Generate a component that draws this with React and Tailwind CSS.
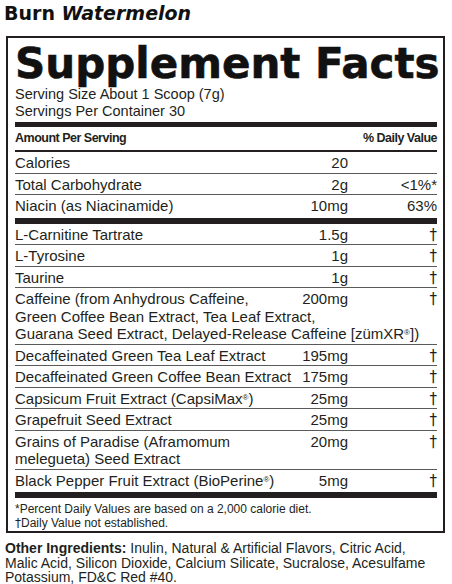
import clsx from 'clsx';

// Burn Watermelon – supplement facts panel
const Reg = () => <sup className="text-[8px]">®</sup>;
const Dag = () => <span className="font-['DejaVu_Sans',sans-serif] leading-none text-[#231f20]">†</span>;

const top = [
  { name: 'Calories', amt: '20', dv: '' },
  { name: 'Total Carbohydrate', amt: '2g', dv: '<1%*' },
  { name: 'Niacin (as Niacinamide)', amt: '10mg', dv: '63%', last: true },
];

const actives = [
  { name: 'L-Carnitine Tartrate', amt: '1.5g', dv: <Dag /> },
  { name: 'L-Tyrosine', amt: '1g', dv: <Dag /> },
  { name: 'Taurine', amt: '1g', dv: <Dag /> },
  {
    name: 'Caffeine (from Anhydrous Caffeine,',
    amt: '200mg',
    dv: <Dag />,
    more: [
      'Green Coffee Bean Extract, Tea Leaf Extract,',
      <>Guarana Seed Extract, Delayed-Release Caffeine [zümXR<Reg />])</>,
    ],
  },
  { name: 'Decaffeinated Green Tea Leaf Extract', amt: '195mg', dv: <Dag /> },
  { name: 'Decaffeinated Green Coffee Bean Extract', amt: '175mg', dv: <Dag /> },
  { name: <>Capsicum Fruit Extract (CapsiMax<Reg />)</>, amt: '25mg', dv: <Dag /> },
  { name: 'Grapefruit Seed Extract', amt: '25mg', dv: <Dag /> },
  {
    name: 'Grains of Paradise (Aframomum',
    amt: '20mg',
    dv: <Dag />,
    more: ['melegueta) Seed Extract'],
  },
  { name: <>Black Pepper Fruit Extract (BioPerine<Reg />)</>, amt: '5mg', dv: <Dag />, last: true },
];

function Row({ name, amt, dv, more, last }) {
  return (
    <div
      className={clsx(
        'pt-[2px] text-[15px] leading-[17.5px]',
        last ? 'pb-[3px] border-b-[6px] border-[#231f20]' : 'pb-[1px] border-b border-[#5a5a5a]'
      )}
    >
      <div className="flex">
        <div className="flex-1 min-w-0 whitespace-nowrap">{name}</div>
        <div className="shrink-0 text-right">{amt}</div>
        <div className="w-[89px] shrink-0 text-right">{dv}</div>
      </div>
      {more?.map((l, i) => (
        <div key={i} className="whitespace-nowrap">{l}</div>
      ))}
    </div>
  );
}

export default function App() {
  return (
    <div className="w-[452px] h-[584px] overflow-hidden bg-white text-[#231f20] font-['Liberation_Sans',Arial,sans-serif]">
      <div className="h-[36px] pl-[4px] pt-[2px] text-[19px] leading-[22px] font-bold font-['DejaVu_Sans',sans-serif] text-[#111]">
        Burn <i>Watermelon</i>
      </div>

      <div className="ml-[6px] w-[439px] border-2 border-[#231f20] pl-[7px] pr-[6px]">
        <div className="pt-[4.5px] text-[42px] leading-[42px] font-bold font-['DejaVu_Sans',sans-serif] whitespace-nowrap text-[#111] [-webkit-text-stroke:0.6px_#111]">
          Supplement Facts
        </div>
        <div className="mt-[1.5px] text-[14.5px] leading-[16.5px]">
          <div>Serving Size About 1 Scoop (7g)</div>
          <div>Servings Per Container 30</div>
        </div>
        <div className="mt-[3px] h-[5px] bg-[#231f20]" />

        <div className="flex justify-between pt-[4px] pb-[4px] text-[12.5px] leading-[15px] font-bold tracking-[-0.5px] border-b-2 border-[#231f20]">
          <span>Amount Per Serving</span>
          <span>% Daily Value</span>
        </div>

        {top.map((r, i) => (
          <Row key={i} {...r} />
        ))}
        {actives.map((r, i) => (
          <Row key={i} {...r} />
        ))}

        <div className="pt-[4px] pb-[1px] text-[12px] leading-[14px]">
          <div>*Percent Daily Values are based on a 2,000 calorie diet.</div>
          <div>
            <Dag />Daily Value not established.
          </div>
        </div>
      </div>

      <p className="mt-[8px] pl-[5px] text-[14px] leading-[14.5px] whitespace-nowrap">
        <b>Other Ingredients:</b> Inulin, Natural &amp; Artificial Flavors, Citric Acid,
        <br />
        Malic Acid, Silicon Dioxide, Calcium Silicate, Sucralose, Acesulfame
        <br />
        Potassium, FD&amp;C Red #40.
      </p>
    </div>
  );
}
